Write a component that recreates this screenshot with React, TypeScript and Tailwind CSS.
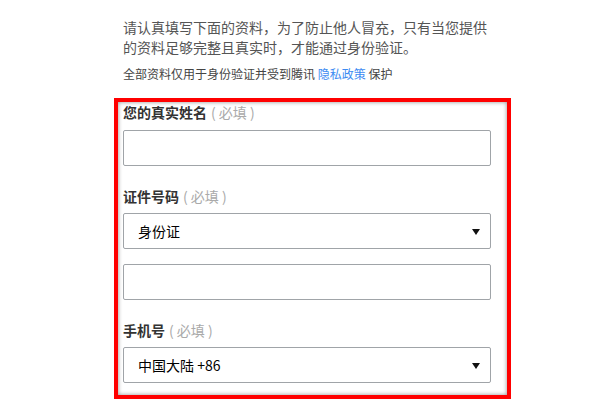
const FONT = "font-['Microsoft_YaHei','Noto_Sans_CJK_SC',sans-serif]"

function Label({ title }: { title: string }) {
  return (
    <div className="h-[20px] text-[14px] leading-[20px]">
      <span className="font-bold text-[#333]">{title}</span>
      <span className="ml-[4px] text-[#aaa]">( 必填 )</span>
    </div>
  )
}

function TextBox() {
  return (
    <div className="h-[36px] w-full rounded-[2px] border border-[#a0a4a8] bg-white" />
  )
}

function SelectBox({ value }: { value: string }) {
  return (
    <div className="flex h-[36px] w-full items-center justify-between rounded-[2px] border border-[#a0a4a8] bg-white pl-[14px] pr-[10px]">
      <span className="text-[14px] leading-[20px] text-black">{value}</span>
      <svg width="8" height="6" viewBox="0 0 8 6" className="mt-[1px]">
        <path d="M0 0h8L4 6z" fill="#111" />
      </svg>
    </div>
  )
}

export default function App() {
  return (
    <div className={`h-[400px] w-[600px] overflow-hidden bg-white ${FONT}`}>
      <div className="pl-[123px] pt-[17px]">
        <p className="w-[368px] text-[14px] leading-[20px] text-[#555]">
          请认真填写下面的资料，为了防止他人冒充，只有当您提供的资料足够完整且真实时，才能通过身份验证。
        </p>
        <p className="mt-[8px] text-[12px] leading-[18px] text-[#444]">
          全部资料仅用于身份验证并受到腾讯
          <span className="text-[#3d8bf2]"> 隐私政策 </span>
          保护
        </p>
      </div>

      <div className="ml-[114px] mt-[15px] w-[397px] border-[4px] border-[#ff0000] pb-[12px] pl-[5px] pr-[16px] shadow-[inset_0_0_4px_rgba(0,0,0,0.45)]">
        <Label title="您的真实姓名" />
        <div className="mt-[8px]">
          <TextBox />
        </div>
        <div className="mt-[20px]">
          <Label title="证件号码" />
        </div>
        <div className="mt-[7px]">
          <SelectBox value="身份证" />
        </div>
        <div className="mt-[15px]">
          <TextBox />
        </div>
        <div className="mt-[20px]">
          <Label title="手机号" />
        </div>
        <div className="mt-[7px]">
          <SelectBox value="中国大陆 +86" />
        </div>
      </div>
    </div>
  )
}
